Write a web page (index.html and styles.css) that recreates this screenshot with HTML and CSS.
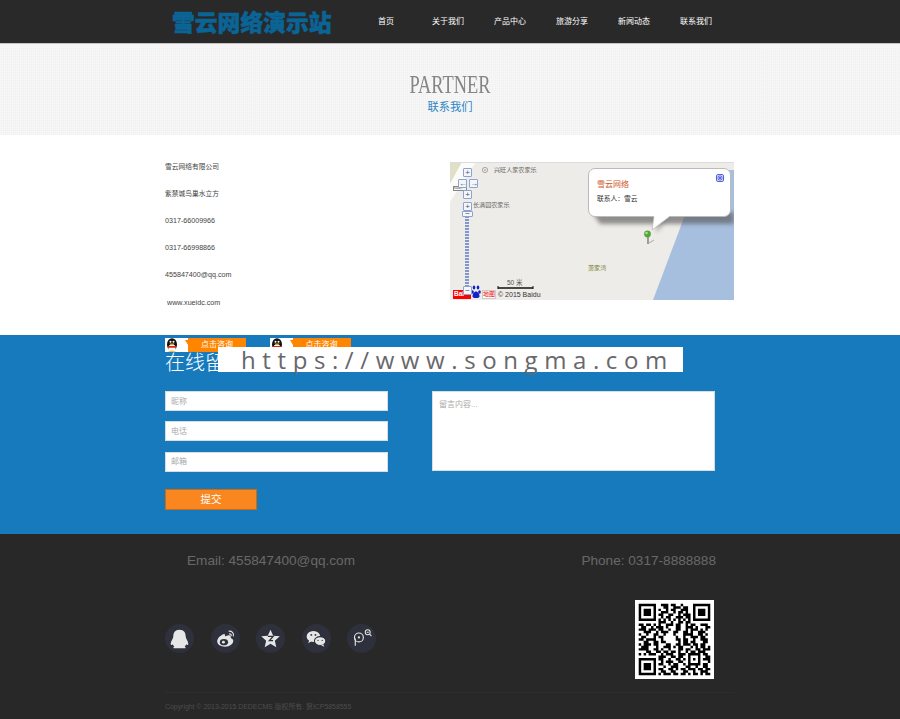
FILE: index.html
```html
<!DOCTYPE html>
<html lang="zh-CN">
<head>
<meta charset="utf-8">
<title>联系我们</title>
<link rel="stylesheet" href="styles.css">
</head>
<body>
<header class="top">
  <div class="top-inner">
    <div class="logo">雪云网络演示站</div>
    <nav class="nav">
      <a>首页</a><a>关于我们</a><a>产品中心</a><a>旅游分享</a><a>新闻动态</a><a>联系我们</a>
    </nav>
  </div>
</header>
<section class="banner">
  <h1>PARTNER</h1>
  <p>联系我们</p>
</section>
<main class="contact">
  <div class="wrap contact-row">
    <ul class="info">
      <li>雪云网络有限公司</li>
      <li>紫禁城鸟巢水立方</li>
      <li class="info-latin">0317-66009966</li>
      <li class="info-latin">0317-66998866</li>
      <li class="info-latin">455847400@qq.com</li>
      <li class="info-latin info-site">www.xueidc.com</li>
    </ul>
    <div class="map">
      <svg class="map-bg" width="284" height="138" viewBox="0 0 284 138">
        <defs><filter id="soft" x="-20%" y="-50%" width="140%" height="200%"><feGaussianBlur stdDeviation="2.200"/></filter></defs>
        <rect width="284" height="138" fill="#eeece8"/>
        <path d="M0 0H12L0 22z" fill="#e2dfc9"/>
        <path d="M12 0H26L0 40V22z" fill="#fbfbf9"/>
        <path d="M252 8H284V138H203z" fill="#a6bfdf"/>
        <path d="M0 .5H284" stroke="#dcdcdc"/>
        <path d="M142 50H284V62H150z" fill="#555" opacity=".62" filter="url(#soft)"/>
        <path d="M203 55h16l-12 16z" fill="#666" opacity=".4" filter="url(#soft)"/>
        <circle cx="35" cy="8" r="2.600" fill="none" stroke="#777" stroke-width=".6"/>
        <circle cx="35" cy="8" r=".7" fill="#777"/>
        <path d="M198 75v7" stroke="#888" stroke-width="1.600"/>
        <path d="M199 81l5-3" stroke="#bbb" stroke-width="1.400"/>
        <circle cx="197.500" cy="72" r="3.400" fill="#55a838"/>
        <circle cx="196.500" cy="71" r="1.300" fill="#a8e08e"/>
        <path d="M48 126h35" stroke="#111" stroke-width="1.600"/>
        <path d="M48 124v3M83 124v3" stroke="#111"/>
        <path class="map-rail" d="M17 54V126"/>
      </svg>
      <span class="poi poi-a">兴旺人家农家乐</span>
      <span class="poi poi-b">长满园农家乐</span>
      <span class="poi poi-c">萧家湾</span>
      <span class="scale">50 米</span>
      <span class="map-credit">© 2015 Baidu</span>
      <span class="map-tag">Kaoel</span>
      <span class="map-brand"><em>Bai</em><svg width="10" height="14" viewBox="0 0 10 14"><ellipse cx="3" cy="2.500" rx="1.300" ry="2" fill="#1220c8"/><ellipse cx="7" cy="2.500" rx="1.300" ry="2" fill="#1220c8"/><ellipse cx="1.500" cy="7" rx="1.300" ry="1.800" fill="#1220c8"/><ellipse cx="8.500" cy="7" rx="1.300" ry="1.800" fill="#1220c8"/><path d="M5 6.500c-2 0-3.500 2.500-3.500 5 0 2 7 2 7 0 0-2.500-1.500-5-3.500-5z" fill="#1220c8"/></svg><i>地图</i></span>
      <span class="ctl ctl-up">+</span>
      <span class="ctl ctl-left">←</span>
      <span class="ctl ctl-right">→</span>
      <span class="ctl ctl-down">+</span>
      <span class="ctl ctl-plus">+</span>
      <span class="ctl ctl-minus">−</span>
      <span class="ctl ctl-minus2">−</span>
      <div class="bubble">
        <svg class="bubble-tail" width="20" height="16" viewBox="0 0 20 16"><path d="M3 0H18V1L1 14z" fill="#fff"/><path d="M3 1L1 14L18 1" fill="none" stroke="#bbb" stroke-width=".8"/></svg>
        <svg class="bubble-x" width="8" height="8" viewBox="0 0 8 8"><rect x=".5" y=".5" width="7" height="7" rx="1.500" fill="#dfe3ff" stroke="#5560d8"/><circle cx="4" cy="4" r="2.200" fill="none" stroke="#3a44c4" stroke-width=".7"/><path d="M2.500 2.500l3 3M5.500 2.500l-3 3" stroke="#3a44c4" stroke-width=".8"/></svg>
        <strong>雪云网络</strong>
        <span>联系人：雪云</span>
      </div>
    </div>
  </div>
  <div class="wrap qq-row">
    <a class="qq"><svg class="qq-icon" width="23" height="14" viewBox="0 0 23 14"><rect width="23" height="14" fill="#fff"/><ellipse cx="7" cy="6.500" rx="5" ry="6.300" fill="#111"/><circle cx="5.500" cy="3.800" r="1" fill="#fff"/><circle cx="8.500" cy="3.800" r="1" fill="#fff"/><ellipse cx="7" cy="10" rx="3.600" ry="3.400" fill="#fff"/><path d="M4.500 5.500h5l-1 1.500h-3z" fill="#f0a810"/><path d="M2.500 8h9l-.5 1.800h-8z" fill="#d0281c"/><path d="M2 13.800l5-1.300 5 1.300z" fill="#f0a810"/><path d="M20 2h3v5z" fill="#ff8500"/></svg><span>点击咨询</span></a>
    <a class="qq"><svg class="qq-icon" width="23" height="14" viewBox="0 0 23 14"><rect width="23" height="14" fill="#fff"/><ellipse cx="7" cy="6.500" rx="5" ry="6.300" fill="#111"/><circle cx="5.500" cy="3.800" r="1" fill="#fff"/><circle cx="8.500" cy="3.800" r="1" fill="#fff"/><ellipse cx="7" cy="10" rx="3.600" ry="3.400" fill="#fff"/><path d="M4.500 5.500h5l-1 1.500h-3z" fill="#f0a810"/><path d="M2.500 8h9l-.5 1.800h-8z" fill="#d0281c"/><path d="M2 13.800l5-1.300 5 1.300z" fill="#f0a810"/><path d="M20 2h3v5z" fill="#ff8500"/></svg><span>点击咨询</span></a>
  </div>
</main>
<section class="message">
  <div class="wrap">
    <h2>在线留言栏，提交，我们的客服人员会尽快回复您。</h2>
    <form class="form">
      <div class="fields">
        <input type="text" placeholder="昵称">
        <input type="text" placeholder="电话">
        <input type="text" placeholder="邮箱">
        <button type="button">提交</button>
      </div>
      <textarea placeholder="留言内容..."></textarea>
    </form>
  </div>
  <div class="watermark">https://www.songma.com</div>
</section>
<footer class="foot">
  <div class="wrap">
    <div class="foot-contact">
      <span>Email: 455847400@qq.com</span>
      <span>Phone: 0317-8888888</span>
    </div>
    <div class="foot-mid">
      <div class="socials">
        <a class="soc"><svg viewBox="0 0 28 28"><path d="M14 5.500c-4.500 0-6 3-6 6.500 0 2-2.500 4.500-2.500 7 0 1.500 1 1.500 2 .5.500 1.500 1.500 2 1.500 2.500-1 .5-1.500 1-.5 1.500h11c1-.5.500-1-.5-1.500 0-.5 1-1 1.500-2.500 1 1 2 1 2-.5 0-2.500-2.500-5-2.500-7 0-3.500-1.500-6.500-6-6.500z" fill="#e6e6e6"/></svg></a>
        <a class="soc"><svg viewBox="0 0 28 28"><path d="M12 10c-3 1-6 4-6 7 0 3 3.500 5 7.500 5 5 0 8-3 8-5.500 0-2-1.500-2.500-2.500-3 .5-1.500 0-3-3-2.500-1 .3-2 .8-2.500.8 .3-2-.5-2.500-1.500-1.800z" fill="#e6e6e6"/><ellipse cx="12.500" cy="17.500" rx="4" ry="3" fill="#2e303c"/><circle cx="12" cy="17.500" r="1.400" fill="#e6e6e6"/><path d="M17 7c3-.5 5.500 2 4.500 5M17.500 9.500c1.500-.2 2.300.8 2 2.200" fill="none" stroke="#e6e6e6" stroke-width="1.100"/></svg></a>
        <a class="soc"><svg viewBox="0 0 28 28"><path d="M14 5.500l2.600 5.800 6.400.6-4.800 4.200 1.400 6.400-5.600-3.400-5.600 3.400 1.400-6.400L5 11.900l6.400-.6z" fill="#e6e6e6"/><path d="M11.500 12h5l-3.500 4h3.500" fill="none" stroke="#2e303c" stroke-width="1.300"/></svg></a>
        <a class="soc"><svg viewBox="0 0 28 28"><ellipse cx="11" cy="12" rx="6.500" ry="5.300" fill="#e6e6e6"/><path d="M7 15.500l-1 3 3.500-2z" fill="#e6e6e6"/><ellipse cx="17.500" cy="16.500" rx="5.500" ry="4.300" fill="#e6e6e6" stroke="#2e303c"/><path d="M20.500 19.500l1 2.500-3-1.500z" fill="#e6e6e6"/><circle cx="9" cy="10.500" r=".9" fill="#2e303c"/><circle cx="13" cy="10.500" r=".9" fill="#2e303c"/><circle cx="15.500" cy="15.800" r=".7" fill="#2e303c"/><circle cx="19.500" cy="15.800" r=".7" fill="#2e303c"/></svg></a>
        <a class="soc"><svg viewBox="0 0 28 28"><circle cx="11.500" cy="13" r="4.300" fill="none" stroke="#e6e6e6" stroke-width="1.100"/><circle cx="11.500" cy="13" r="1.100" fill="#e6e6e6"/><path d="M8 14v7" stroke="#e6e6e6" stroke-width="1.100"/><circle cx="20" cy="8" r="2.400" fill="none" stroke="#e6e6e6" stroke-width="1"/><path d="M21.800 9.800l1.800 1.800M19 8h2" stroke="#e6e6e6"/></svg></a>
      </div>
      <svg class="qr" width="79" height="79" viewBox="-1.500 -1.500 32 32"><rect x="-1.500" y="-1.500" width="32" height="32" fill="#fff"/><path fill="none" stroke="#000" d="M0 .5h7m2 0h3m1 0h2m2 0h1m4 0h7M0 1.500h1m5 0h1m3 0h2m2 0h3m1 0h2m2 0h1m5 0h1M0 2.500h1m1 0h3m1 0h1m1 0h1m2 0h1m1 0h2m2 0h3m2 0h1m1 0h3m1 0h1M0 3.500h1m1 0h3m1 0h1m2 0h3m2 0h1m1 0h2m1 0h1m2 0h1m1 0h3m1 0h1M0 4.500h1m1 0h3m1 0h1m1 0h2m2 0h2m2 0h1m1 0h3m1 0h1m1 0h3m1 0h1M0 5.500h1m5 0h1m2 0h1m1 0h2m2 0h3m1 0h2m1 0h1m5 0h1M0 6.500h7m1 0h1m1 0h1m1 0h1m1 0h1m1 0h1m1 0h1m1 0h1m1 0h7M8 7.500h3m2 0h1m2 0h2m1 0h2M0 8.500h2m1 0h2m1 0h1m1 0h1m2 0h3m1 0h2m2 0h1m1 0h2m2 0h3M1 9.500h2m2 0h1m1 0h3m1 0h1m3 0h2m2 0h3m1 0h1m3 0h2M0 10.500h3m1 0h3m1 0h2m2 0h1m2 0h2m2 0h1m1 0h3m1 0h1m1 0h1M2 11.500h3m2 0h1m1 0h3m2 0h2m2 0h2m1 0h1m2 0h3M0 12.500h1m2 0h1m2 0h2m2 0h1m3 0h1m3 0h4m2 0h2m1 0h1M1 13.500h2m3 0h1m1 0h2m5 0h1m2 0h1m2 0h3m1 0h2M0 14.500h2m1 0h4m2 0h1m5 0h2m1 0h2m2 0h1m2 0h3M2 15.500h2m2 0h2m1 0h2m5 0h1m1 0h2m1 0h2m3 0h2M0 16.500h1m1 0h3m1 0h2m3 0h2m2 0h2m1 0h3m1 0h2m1 0h2M1 17.500h3m3 0h1m2 0h3m1 0h1m1 0h2m3 0h1m1 0h1m1 0h2m1 0h1M0 18.500h4m2 0h2m1 0h1m2 0h1m3 0h2m1 0h2m2 0h2m1 0h3M3 19.500h2m2 0h2m1 0h2m1 0h2m1 0h1m2 0h1m1 0h2m1 0h3M0 20.500h1m1 0h1m1 0h3m2 0h1m1 0h3m2 0h3m1 0h5m1 0h2M8 21.500h3m2 0h2m1 0h2m2 0h1m3 0h1m2 0h2M0 22.500h7m1 0h2m2 0h1m2 0h2m1 0h1m1 0h1m1 0h1m1 0h1m1 0h3M0 23.500h1m5 0h1m2 0h1m1 0h3m2 0h2m2 0h1m3 0h1m3 0h1M0 24.500h1m1 0h3m1 0h1m1 0h2m2 0h1m1 0h2m2 0h1m1 0h5m1 0h2M0 25.500h1m1 0h3m1 0h1m3 0h1m2 0h3m3 0h2m2 0h1m2 0h2M0 26.500h1m1 0h3m1 0h1m1 0h2m2 0h2m1 0h1m1 0h2m1 0h3m1 0h2m1 0h2M0 27.500h1m5 0h1m2 0h2m2 0h2m3 0h2m2 0h1m2 0h3M0 28.500h7m1 0h1m1 0h3m1 0h2m1 0h2m1 0h1m1 0h2m1 0h1m1 0h2"/></svg>
    </div>
    <p class="copy">Copyright © 2013-2015 DEDECMS 版权所有. 冀ICP5858555</p>
  </div>
</footer>
</body>
</html>
```
FILE: styles.css
```css
* { box-sizing: border-box; }
html, body { margin: 0; padding: 0; }
body { font-family: "Liberation Sans", "Noto Sans CJK SC", sans-serif; background: #fff; color: #333; height: 719px; overflow: hidden; }
.wrap { width: 570px; margin-left: 165px; }

.top { height: 43px; background: #292929; }
.top-inner { display: flex; margin-left: 172px; align-items: center; height: 43px; }
.logo { width: 183px; font-family: "Noto Sans CJK SC", sans-serif; font-weight: 900; font-size: 22.800px; line-height: 40px; color: #0a6496; -webkit-text-stroke: .5px #0a6496; white-space: nowrap; }
.nav { display: flex; }
.nav a { display: block; width: 62px; text-align: center; font-size: 8px; line-height: 12px; color: #fff; }

.banner { height: 92px; border-top: 1px solid #c4c4c4; background: repeating-linear-gradient(0deg, rgba(0,0,0,.012) 0 1px, transparent 1px 2px), repeating-linear-gradient(90deg, rgba(255,255,255,.35) 0 1px, transparent 1px 2px), #f4f4f4; text-align: center; padding-top: 26px; }
.banner h1 { margin: 0; font-family: "Liberation Serif", serif; font-weight: 400; font-size: 25px; line-height: 30px; color: #858585; transform: scaleX(.735); }
.banner p { margin: 0; font-size: 11.300px; line-height: 14px; color: #2c85c6; }

.contact { height: 200px; position: relative; }
.contact-row { display: flex; justify-content: space-between; padding-top: 27px; width: 569px; }
.info { list-style: none; margin: 0; padding: 0; font-size: 6.750px; line-height: 9px; color: #444; }
.info li { height: 27.350px; }
.info .info-latin { font-size: 7.150px; }
.info .info-site { padding-left: 2px; }

.map { position: relative; width: 284px; height: 138px; overflow: hidden; }
.map-bg { display: block; }
.map-rail { fill: none; stroke: #8098cc; stroke-width: 4; stroke-dasharray: 2 1; }
.poi { position: absolute; font-size: 6.100px; line-height: 8px; color: #666; white-space: nowrap; }
.poi-a { left: 44px; top: 4px; }
.poi-b { left: 23px; top: 39px; }
.poi-c { left: 138px; top: 102px; color: #777a2c; }
.scale { position: absolute; left: 57px; top: 117px; font-size: 6.500px; line-height: 7px; color: #555; white-space: nowrap; }
.map-credit { position: absolute; left: 48px; top: 129px; font-size: 7px; line-height: 8px; color: #333; white-space: nowrap; }
.map-tag { position: absolute; left: 3px; top: 24px; width: 14px; height: 5px; background: #f4f4f0; border: 1px solid #888; font-size: 3px; line-height: 3px; color: #555; overflow: hidden; }
.map-brand { position: absolute; left: 3px; top: 122px; width: 43px; height: 15px; display: flex; align-items: flex-end; font-size: 6.500px; line-height: 8px; white-space: nowrap; }
.map-brand em { font-style: normal; font-weight: 700; color: #fff; background: #f00; width: 18px; height: 9px; padding-left: 1px; }
.map-brand svg { display: block; flex: none; }
.map-brand i { flex: none; width: 14px; font-style: normal; color: #e00; background: #fff; border: 1px solid #ccc; height: 9px; line-height: 7px; font-size: 6px; margin-left: 1px; text-align: center; }
.ctl { position: absolute; width: 9px; height: 9px; background: #f4f6fb; border: 1px solid #8ea3cc; border-radius: 1px; font-size: 8px; line-height: 7px; text-align: center; color: #456; }
.ctl-up { left: 13px; top: 6px; }
.ctl-left { left: 8px; top: 17px; }
.ctl-right { left: 19px; top: 17px; }
.ctl-down { left: 13px; top: 28px; }
.ctl-plus { left: 13px; top: 40px; }
.ctl-minus { left: 12px; top: 49px; width: 11px; height: 6px; line-height: 4px; }
.ctl-minus2 { left: 13px; top: 124px; }
.bubble { position: absolute; left: 138px; top: 6px; width: 143px; height: 49px; background: #fff; border: 1px solid #bbb; border-radius: 7px; padding: 10px 8px; font-size: 6.750px; line-height: 10px; color: #333; }
.bubble strong { display: block; color: #d0562a; font-size: 8px; font-weight: 400; line-height: 12px; margin-bottom: 3px; }
.bubble span { display: block; }
.bubble-tail { position: absolute; left: 62px; top: 47px; display: block; }
.bubble-x { position: absolute; right: 6px; top: 5px; display: block; }

.qq-row { position: absolute; left: 0; top: 203px; z-index: 1; display: flex; gap: 23.500px; height: 14px; }
.qq { display: flex; width: 81px; height: 14px; }
.qq-icon { display: block; flex: none; }
.qq span { flex: 1; background: #ff8500; color: #fff; font-size: 8px; line-height: 14px; text-align: center; }

.message { height: 199px; background: #167abd; position: relative; padding-top: 15px; }
.message h2 { margin: 0; font-family: "Noto Sans CJK SC", sans-serif; font-size: 20px; line-height: 24px; font-weight: 300; color: #fff; white-space: nowrap; }
.form { display: flex; justify-content: space-between; padding-top: 17px; width: 550px; }
.fields { display: flex; flex-direction: column; width: 223px; align-items: flex-start; }
.fields input { width: 223px; height: 20px; border: 1px solid #d8dde2; background: #fff; padding: 0 5px; margin-bottom: 10.300px; font: 8px "Liberation Sans", "Noto Sans CJK SC", sans-serif; outline: 0; }
.form ::placeholder { color: #aaa; opacity: 1; }
.fields button { margin-top: 7px; width: 92px; height: 21px; background: #fa861f; border: 1px solid #c96a14; color: #fff; font: 10.500px/18px "Noto Sans CJK SC", sans-serif; padding: 0; }
.form textarea { width: 283px; height: 80px; border: 1px solid #d8dde2; background: #fff; padding: 6px 6px; font: 8px "Liberation Sans", "Noto Sans CJK SC", sans-serif; resize: none; outline: 0; }
.watermark { position: absolute; left: 218px; top: 12px; z-index: 2; width: 465px; height: 25px; background: #fff; color: #68686c; font: 24px/25px "Open Sans", sans-serif; letter-spacing: 6.600px; white-space: nowrap; padding-left: 23px; }

.foot { height: 185px; background: #282828; }
.foot-contact { display: flex; justify-content: space-between; padding: 18px 0 0 22px; width: 551px; font-size: 13.600px; line-height: 17px; color: #686868; }
.foot-mid { display: flex; justify-content: space-between; align-items: flex-start; width: 549px; padding-top: 31px; }
.socials { display: flex; gap: 16.600px; padding-top: 24px; }
.soc { display: block; width: 29px; height: 29px; border-radius: 50%; background: #2e303c; }
.soc svg { display: block; width: 29px; height: 29px; }
.qr { display: block; }
.copy { margin: 13px 0 0; padding-top: 9px; border-top: 1px solid #2d2d2d; font-size: 6.900px; line-height: 9px; color: #4d4d4d; white-space: nowrap; }
```
